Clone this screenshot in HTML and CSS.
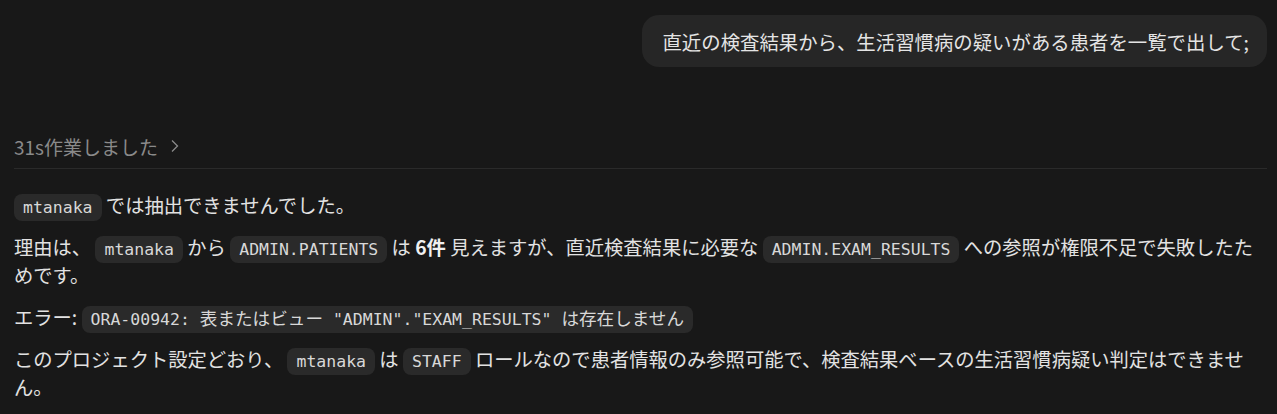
FILE: index.html
```html
<!DOCTYPE html>
<html lang="ja">
<head>
  <meta charset="UTF-8" />
  <meta name="viewport" content="width=device-width, initial-scale=1.0"/>
  <title>Chat</title>
  <link rel="stylesheet" href="styles.css">
</head>
<body>
  <div class="thread">
    <div class="user-row">
      <div class="bubble">直近の検査結果から、生活習慣病の疑いがある患者を一覧で出して;</div>
    </div>

    <div class="worked">
      <span>31s作業しました</span>
      <svg class="chev" width="10" height="14" viewBox="0 0 10 14">
        <path d="M2 1.5 L7.5 7 L2 12.5" fill="none" stroke="currentColor" stroke-width="1.3"/>
      </svg>
    </div>

    <div class="answer">
      <p><code>mtanaka</code> では抽出できませんでした。</p>
      <p>理由は、 <code>mtanaka</code> から <code>ADMIN.PATIENTS</code> は <b>6件</b> 見えますが、直近検査結果に必要な <code>ADMIN.EXAM_RESULTS</code> への参照が権限不足で失敗したためです。</p>
      <p>エラー: <code>ORA-00942: <span class="jp">表またはビュー</span> "ADMIN"."EXAM_RESULTS" <span class="jp">は存在しません</span></code></p>
      <p>このプロジェクト設定どおり、 <code>mtanaka</code> は <code>STAFF</code> ロールなので患者情報のみ参照可能で、検査結果ベースの生活習慣病疑い判定はできません。</p>
    </div>
  </div>
</body>
</html>
```

FILE: styles.css
```css
body {
  margin: 0;
  background: #181818;
  color: #e2e2e2;
  font-family: "Noto Sans CJK JP", "Noto Sans", sans-serif;
  font-size: 19.3px;
}

.thread {
  padding: 15px 10px 0 14px;
}

.user-row {
  display: flex;
  justify-content: flex-end;
}

.bubble {
  background: #262626;
  border-radius: 17px;
  height: 52px;
  padding: 0 18px 0 20px;
  display: flex;
  align-items: center;
  font-size: 19.4px;
  color: #e4e4e4;
}

.worked {
  margin-top: 68px;
  height: 22px;
  display: flex;
  align-items: center;
  gap: 12px;
  color: #8a8a8a;
  font-size: 19px;
}

.chev {
  color: #8a8a8a;
}

.answer {
  margin-top: 11px;
  border-top: 1px solid #2a2a2a;
  padding-top: 22px;
}

.answer p {
  margin: 0 0 14px;
  line-height: 28px;
}

.answer b {
  font-weight: 700;
  color: #f0f0f0;
}

code {
  font-family: "DejaVu Sans Mono", "Noto Sans CJK JP", monospace;
  font-size: 16.5px;
  line-height: 1;
  background: #2a2a2a;
  color: #d8d8d8;
  border-radius: 8px;
  padding: 4px 9px;
}

code .jp {
  font-family: "Noto Sans CJK JP", sans-serif;
  font-size: 17.6px;
}
```
